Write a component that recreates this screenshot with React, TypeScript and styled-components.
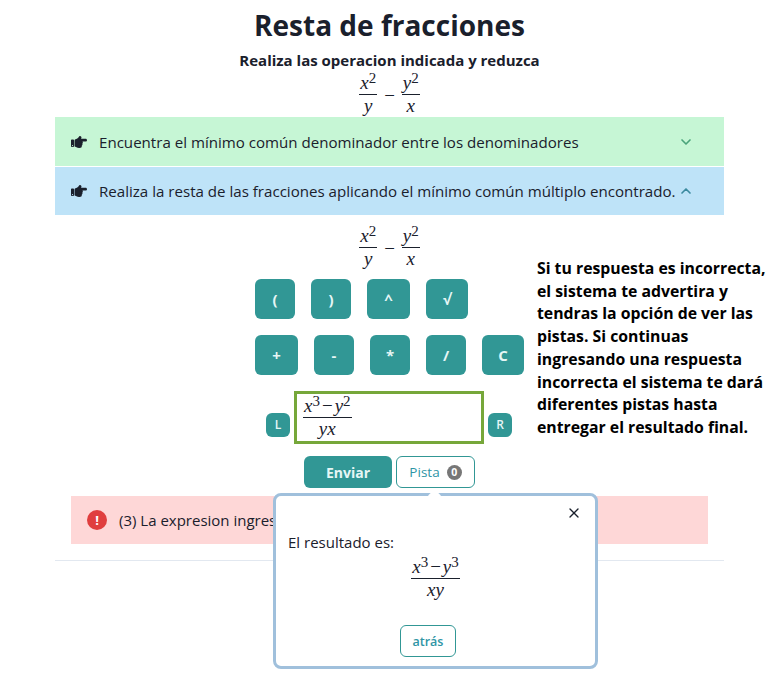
import React from "react";
import styled, { createGlobalStyle } from "styled-components";
import { FaHandPointRight } from "react-icons/fa";
import { ChevronDown, ChevronUp, X } from "lucide-react";

const GlobalStyle = createGlobalStyle`
  html, body {
    margin: 0;
    padding: 0;
    background: #fff;
    font-family: "Open Sans", "Noto Sans", sans-serif;
    color: #1a202c;
  }
`;

const Page = styled.div`
  position: relative;
  width: 779px;
  height: 680px;
  overflow: hidden;
  padding: 0 55px;
  box-sizing: border-box;
  display: flex;
  flex-direction: column;
  align-items: center;
`;

const Title = styled.h1`
  margin: 0;
  height: 50px;
  line-height: 51px;
  font-size: 28px;
  font-weight: 700;
  color: #1a202c;
`;

const Subtitle = styled.h2`
  margin: 0;
  height: 22px;
  line-height: 20px;
  font-size: 15px;
  font-weight: 700;
`;

const Formula = styled.div<{ $pad?: string }>`
  display: flex;
  align-items: center;
  justify-content: center;
  gap: 7px;
  padding: ${(p) => p.$pad || "0"};
  font-family: "Liberation Serif", serif;
  font-size: 19px;
  color: #1a202c;
`;

const Frac = styled.span`
  display: inline-flex;
  flex-direction: column;
  align-items: center;
  font-style: italic;
  line-height: 22px;
`;

const Num = styled.span`
  padding: 0 1px;
  border-bottom: 1px solid #1a202c;
  white-space: nowrap;
`;

const Den = styled.span`
  padding-top: 0;
`;

const Sup = styled.sup`
  font-style: normal;
  font-size: 15px;
  line-height: 0;
  vertical-align: 6px;
`;

const Op = styled.span`
  font-style: normal;
  padding: 0 2px;
`;

const Minus = styled.span`
  padding-top: 3px;
`;

const Accordion = styled.div`
  width: 669px;
  display: flex;
  flex-direction: column;
  gap: 1px;
`;

const AccordionRow = styled.div<{ $bg: string; $h: number }>`
  height: ${(p) => p.$h}px;
  background: ${(p) => p.$bg};
  display: flex;
  align-items: center;
  padding: 0 30px 0 16px;
  box-sizing: border-box;
  font-size: 15.1px;
  color: #1a202c;
`;

const HandIcon = styled(FaHandPointRight)`
  width: 16px;
  height: 16px;
  margin-right: 12px;
  flex: none;
`;

const RowText = styled.span`
  flex: 1;
  white-space: nowrap;
`;

const Keypad = styled.div`
  display: flex;
  flex-direction: column;
  gap: 16px;
  width: 269px;
  margin-top: 9px;
`;

const KeyRow = styled.div`
  display: flex;
  gap: 16px;
`;

const Key = styled.button<{ $w: number }>`
  width: ${(p) => p.$w}px;
  height: 40px;
  padding: 0;
  border: none;
  border-radius: 6px;
  background: #319795;
  color: #e6f6f5;
  font-family: inherit;
  font-size: 15px;
  font-weight: 700;
`;

const InputRow = styled.div`
  display: flex;
  align-items: center;
  gap: 4px;
  margin: 16px 1px 0 0;
`;

const SmallKey = styled.button`
  width: 24px;
  height: 24px;
  margin-top: 14px;
  padding: 0;
  border: none;
  border-radius: 6px;
  background: #319795;
  color: #e6f6f5;
  font-family: inherit;
  font-size: 12px;
  font-weight: 600;
`;

const AnswerBox = styled.div`
  width: 190px;
  height: 53px;
  box-sizing: border-box;
  border: 3px solid #76a73a;
  padding-left: 6px;
  display: flex;
  align-items: center;
  font-family: "Liberation Serif", serif;
  font-size: 19px;
`;

const Actions = styled.div`
  display: flex;
  gap: 4px;
  margin-top: 12px;
`;

const SendButton = styled.button`
  width: 88px;
  height: 32px;
  padding: 0;
  border: none;
  border-radius: 6px;
  background: #319795;
  color: #e6f6f5;
  font-family: inherit;
  font-size: 14px;
  font-weight: 700;
`;

const HintButton = styled.button`
  width: 79px;
  height: 32px;
  padding: 0;
  border: 1px solid #319795;
  border-radius: 6px;
  background: #fff;
  color: #2f95a5;
  font-family: inherit;
  font-size: 13.5px;
  font-weight: 500;
  display: flex;
  align-items: center;
  justify-content: center;
  gap: 7px;
`;

const Badge = styled.span`
  width: 15px;
  height: 15px;
  border-radius: 50%;
  background: #777;
  color: #fff;
  font-size: 10.5px;
  font-weight: 700;
  line-height: 15px;
  text-align: center;
`;

const Alert = styled.div`
  width: 637px;
  height: 48px;
  margin-top: 8px;
  box-sizing: border-box;
  background: #fed7d7;
  display: flex;
  align-items: center;
  gap: 12px;
  padding-left: 16px;
  font-size: 15px;
  white-space: nowrap;
`;

const AlertIcon = styled.span`
  width: 20px;
  height: 20px;
  border-radius: 50%;
  background: #e03e3e;
  color: #fff;
  font-size: 13px;
  font-weight: 700;
  line-height: 20px;
  text-align: center;
  flex: none;
`;

const Divider = styled.hr`
  width: 669px;
  margin: 16px 0 0;
  border: none;
  border-top: 1px solid #e2e8f0;
`;

const SideNote = styled.p`
  position: absolute;
  left: 537px;
  top: 257px;
  margin: 0;
  font-size: 15.8px;
  font-weight: 700;
  line-height: 22.7px;
  color: #000;
  white-space: nowrap;
`;

const Popover = styled.div`
  position: absolute;
  left: 273px;
  top: 493px;
  width: 325px;
  height: 176px;
  box-sizing: border-box;
  background: #fff;
  border: 3px solid #a0c0dc;
  border-radius: 8px;
  padding: 36px 12px 0;
  font-size: 15px;
  display: flex;
  flex-direction: column;
`;

const PopoverArrow = styled.span`
  position: absolute;
  left: 154px;
  top: -5px;
  width: 9px;
  height: 9px;
  background: #fff;
  transform: rotate(45deg);
`;

const CloseIcon = styled(X)`
  position: absolute;
  right: 13px;
  top: 9px;
  width: 16px;
  height: 16px;
  color: #1a202c;
`;

const BackButton = styled.button`
  align-self: center;
  width: 56px;
  height: 32px;
  margin: 24px 0 0 -15px;
  padding: 0;
  border: 1px solid #319795;
  border-radius: 6px;
  background: #fff;
  color: #2f95a5;
  font-family: inherit;
  font-size: 12.5px;
  font-weight: 600;
`;

const ResultFormula = styled(Formula)`
  margin: 4px 0 0;
`;

const BasicFormula = ({ pad }: { pad?: string }) => (
  <Formula $pad={pad}>
    <Frac>
      <Num>
        x<Sup>2</Sup>
      </Num>
      <Den>y</Den>
    </Frac>
    <Minus>−</Minus>
    <Frac>
      <Num>
        y<Sup>2</Sup>
      </Num>
      <Den>x</Den>
    </Frac>
  </Formula>
);

export default function App() {
  return (
    <Page>
      <GlobalStyle />
      <Title>Resta de fracciones</Title>
      <Subtitle>Realiza las operacion indicada y reduzca</Subtitle>
      <BasicFormula />
      <Accordion>
        <AccordionRow $bg="#c6f6d5" $h={49}>
          <HandIcon />
          <RowText>Encuentra el mínimo común denominador entre los denominadores</RowText>
          <ChevronDown size={16} strokeWidth={2.5} color="#4aa37a" />
        </AccordionRow>
        <AccordionRow $bg="#bee3f8" $h={48}>
          <HandIcon />
          <RowText>Realiza la resta de las fracciones aplicando el mínimo común múltiplo encontrado.</RowText>
          <ChevronUp size={16} strokeWidth={2.5} color="#3a8a9f" />
        </AccordionRow>
      </Accordion>
      <BasicFormula pad="10px 0 0" />
      <Keypad>
        <KeyRow>
          <Key $w={40}>(</Key>
          <Key $w={40}>)</Key>
          <Key $w={43}>^</Key>
          <Key $w={42}>√</Key>
        </KeyRow>
        <KeyRow>
          <Key $w={43}>+</Key>
          <Key $w={40}>-</Key>
          <Key $w={40}>*</Key>
          <Key $w={40}>/</Key>
          <Key $w={42}>C</Key>
        </KeyRow>
      </Keypad>
      <InputRow>
        <SmallKey>L</SmallKey>
        <AnswerBox>
          <Frac>
            <Num>
              x<Sup>3</Sup>
              <Op>−</Op>y<Sup>2</Sup>
            </Num>
            <Den>yx</Den>
          </Frac>
        </AnswerBox>
        <SmallKey>R</SmallKey>
      </InputRow>
      <Actions>
        <SendButton>Enviar</SendButton>
        <HintButton>
          Pista <Badge>0</Badge>
        </HintButton>
      </Actions>
      <Alert>
        <AlertIcon>!</AlertIcon>
        (3) La expresion ingresada es incorrecta
      </Alert>
      <Divider />
      <SideNote>
        Si tu respuesta es incorrecta,
        <br />
        el sistema te advertira y
        <br />
        tendras la opción de ver las
        <br />
        pistas. Si continuas
        <br />
        ingresando una respuesta
        <br />
        incorrecta el sistema te dará
        <br />
        diferentes pistas hasta
        <br />
        entregar el resultado final.
      </SideNote>
      <Popover>
        <PopoverArrow />
        <CloseIcon />
        El resultado es:
        <ResultFormula>
          <Frac>
            <Num>
              x<Sup>3</Sup>
              <Op>−</Op>y<Sup>3</Sup>
            </Num>
            <Den>xy</Den>
          </Frac>
        </ResultFormula>
        <BackButton>atrás</BackButton>
      </Popover>
    </Page>
  );
}
